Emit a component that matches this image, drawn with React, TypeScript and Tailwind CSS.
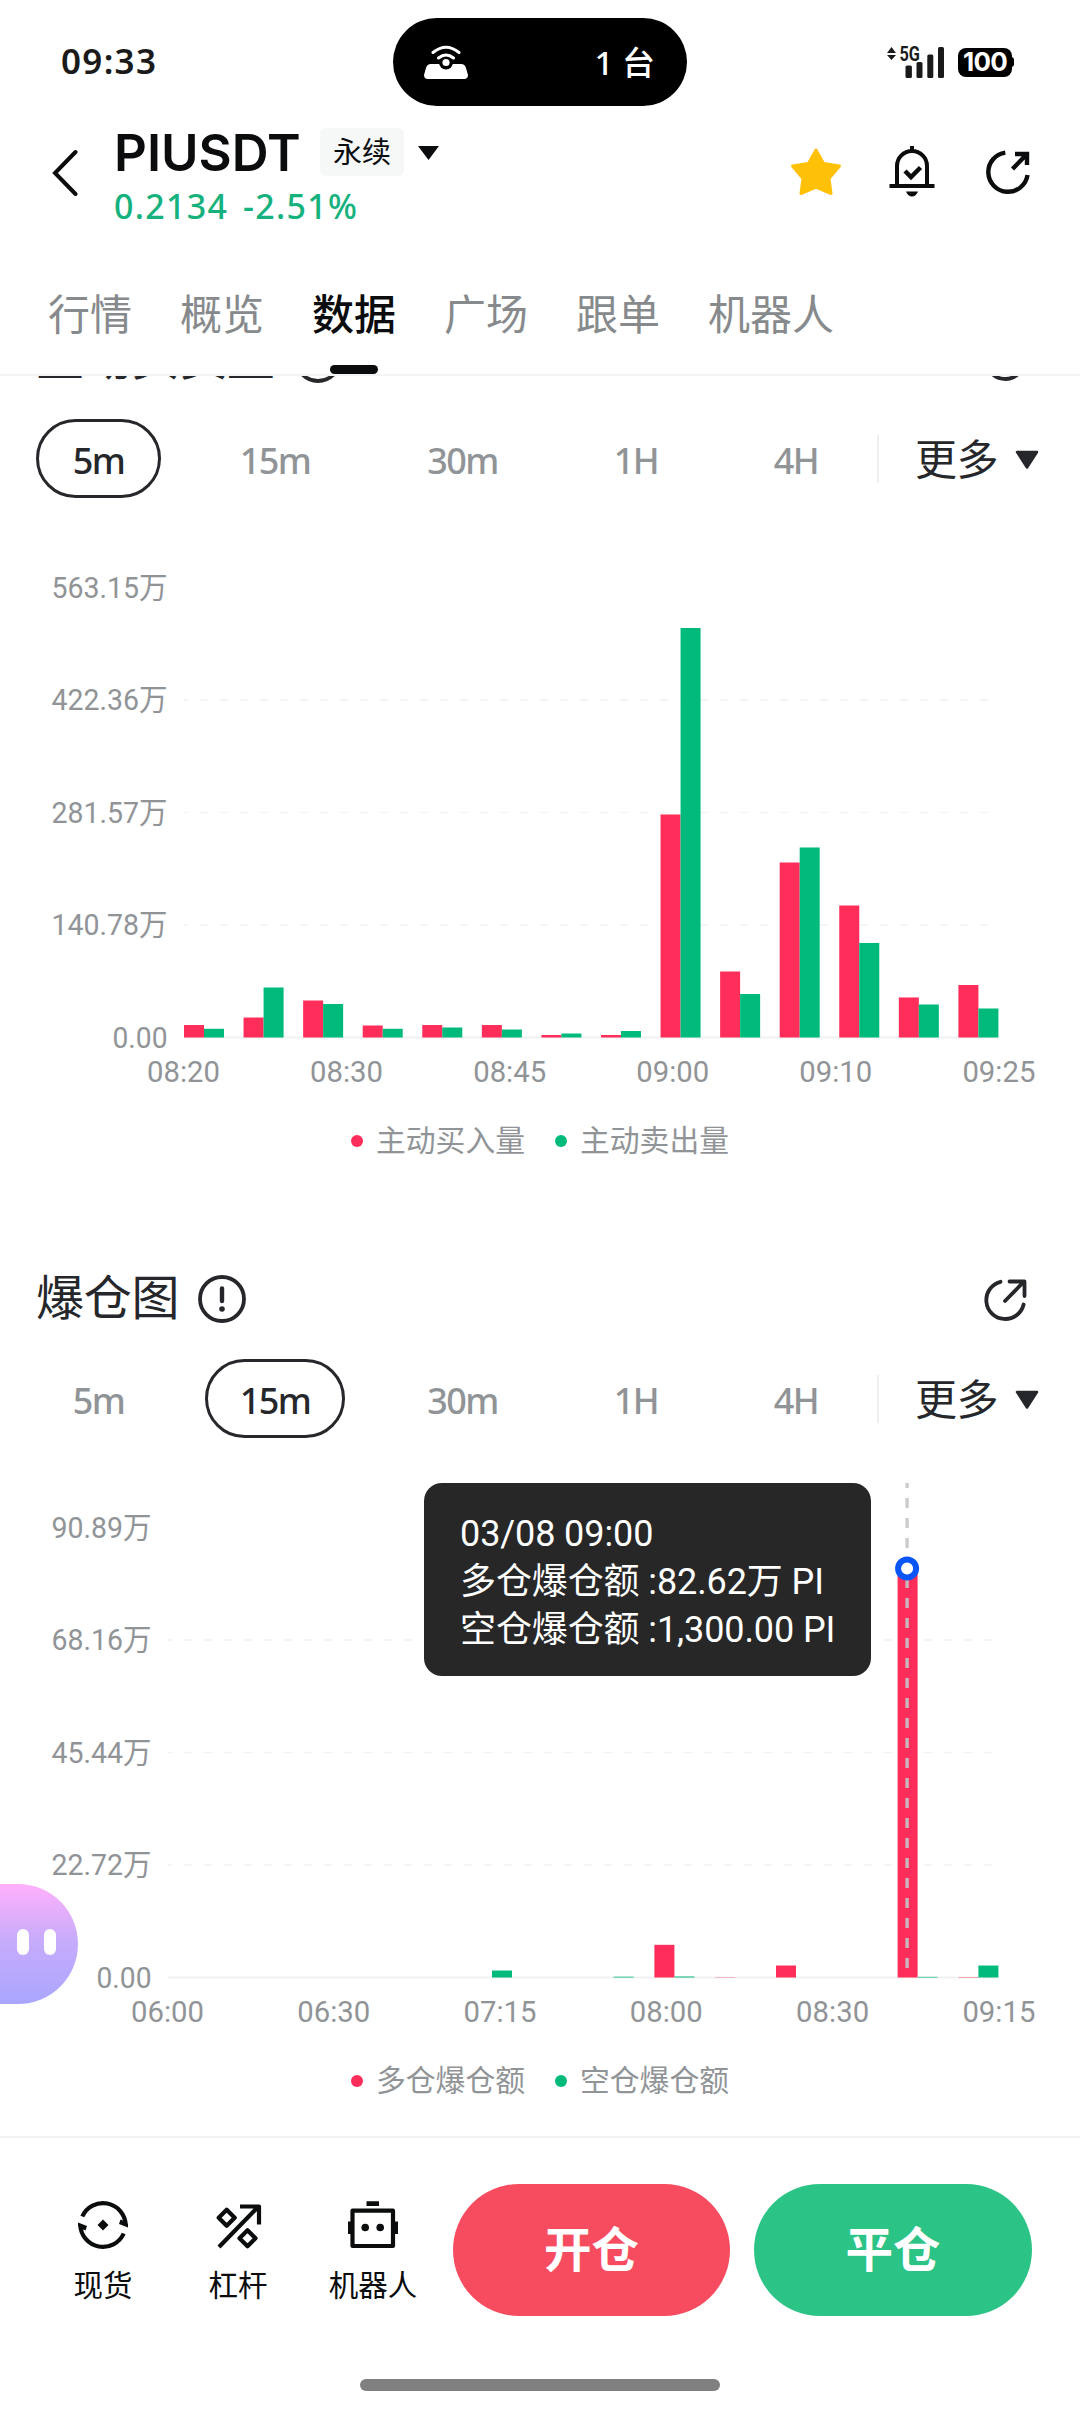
import type { ReactNode } from "react"
import clsx from "clsx"

const RED = "#ff2d5a"
const GREEN = "#00ba7c"

const TABS = ["行情", "概览", "数据", "广场", "跟单", "机器人"]

const PERIODS = [
  { id: "5m", width: "w-[125px]" },
  { id: "15m", width: "w-[140px]" },
  { id: "30m", width: "w-[147px]" },
  { id: "1H", width: "w-[112px]" },
  { id: "4H", width: "w-[120px]" },
]

// [red, green], unit: 万
type Pair = [number, number]

const VOLUME: Pair[] = [
  [15.6, 10.9], [25, 62.6], [46.3, 41.9], [15, 10.9], [15.6, 12.5], [15.6, 10], [3.1, 5],
  [3.1, 8.1], [279.1, 512.5], [82.6, 54.4], [219, 237.8], [165.2, 118.3], [50.1, 41.3], [65.7, 36.3],
]

const LIQUIDATION: Pair[] = [
  [0, 0], [0, 0], [0, 0], [0, 0], [0, 0], [0, 1.41], [0, 0],
  [0, 0.16], [6.6, 0.2], [0.06, 0], [2.42, 0], [0, 0], [82.62, 0.13], [0.08, 2.42],
]

/* ---------- icons ---------- */

function HotspotIcon() {
  return (
    <svg width="44" height="34" viewBox="0 0 44 34" fill="none">
      <path d="M7 19h30q4 0 5 4l2 7q0 4-4 4H4q-4 0-4-4l2-7q1-4 5-4Z" fill="#fff" />
      <circle cx="22" cy="17.5" r="7" fill="#000" />
      <circle cx="22" cy="17.5" r="3.6" fill="#fff" />
      <path d="M9 7.5Q22-3 35 7.5M14.5 13Q22 7 29.5 13" stroke="#fff" strokeWidth="3" strokeLinecap="round" />
    </svg>
  )
}

function SignalIcon() {
  return (
    <svg className="overflow-visible" width="58" height="32" viewBox="0 0 58 32" fill="#1a1a1a">
      <path d="M0 7 4.5 1 9 7ZM0 9h9l-4.5 5Z" />
      <text x="12.5" y="14.5" fontSize="19.5" fontWeight="700" fontFamily="Roboto, sans-serif" textLength="20.5" lengthAdjust="spacingAndGlyphs">5G</text>
      <rect x="18.5" y="19.5" width="6.4" height="12.5" rx="1.5" />
      <rect x="29.5" y="16" width="6" height="16" rx="1.5" />
      <rect x="40.3" y="8.5" width="6" height="23.5" rx="1.5" />
      <rect x="51" y="1" width="6" height="31" rx="1.5" />
    </svg>
  )
}

function StarIcon() {
  return (
    <svg width="52" height="50" viewBox="0 0 52 50">
      <path d="M26 3 33.5 16.5 49.5 19 39 31.5 41 46.5 26 40 11 46.5 13 31.5 2.5 19 18.5 16.5Z" fill="#ffc107" stroke="#ffc107" strokeWidth="3" strokeLinejoin="round" />
    </svg>
  )
}

function BellIcon() {
  return (
    <svg width="48" height="52" viewBox="0 0 48 52" fill="none" stroke="#0a0c0d" strokeWidth="4">
      <path d="M24 0v5M9 40V20a15 15 0 0 1 30 0v20M1.5 40h45" />
      <path d="m17 25 6 6 9.5-9.5" strokeWidth="4.5" />
      <path d="M18 45.5h12q-2 5-6 5t-6-5Z" fill="#0a0c0d" stroke="none" />
    </svg>
  )
}

function ShareBoldIcon() {
  return (
    <svg width="48" height="48" viewBox="0 0 48 48" fill="none" stroke="#0a0c0d" strokeWidth="4.4">
      <path d="M21.3 4.6A19.7 19.7 0 1 0 43.5 27M28.5 21 42.5 6.5M31 6H43V17" />
    </svg>
  )
}

function ShareIcon() {
  return (
    <svg width="48" height="48" viewBox="0 0 48 48" fill="none" stroke="#25272b" strokeWidth="3.8" strokeLinecap="round" strokeLinejoin="round">
      <path d="M19.5 5.8A18.9 18.9 0 1 0 42.6 28.5M24 25 43 5.5M28.5 5.5H43.5V20" />
    </svg>
  )
}

function InfoIcon() {
  return (
    <svg width="48" height="48" viewBox="0 0 48 48" fill="none" stroke="#25272b" strokeWidth="3.8" strokeLinecap="round">
      <circle cx="24" cy="24" r="22" />
      <path d="M24 13.5V26" strokeWidth="4.4" />
      <circle cx="24" cy="34" r="2.8" fill="#25272b" stroke="none" />
    </svg>
  )
}

function SpotIcon() {
  return (
    <svg width="50" height="50" viewBox="0 0 50 50">
      {[0, 180].map(deg => (
        <g key={deg} transform={`rotate(${deg} 25 25)`}>
          <path d="M4.3 16.5A22.7 22.7 0 0 1 47.7 25" fill="none" stroke="#0a0c0d" strokeWidth="4.2" />
          <path d="M50 24V27.5L41 24 42.5 19.5 46 21Z" fill="#0a0c0d" />
        </g>
      ))}
      <path d="m25 19.5 5.5 5.5-5.5 5.5-5.5-5.5Z" fill="#0a0c0d" />
    </svg>
  )
}

function LeverageIcon() {
  return (
    <svg width="48" height="48" viewBox="0 0 48 48" fill="none" stroke="#0a0c0d" strokeWidth="4.2" strokeLinejoin="round">
      <path d="M5 45 44 5M26 4.5H45V22.5" />
      <path d="m12.7 7.7 8 8-8 8-8-8ZM33.5 28.3l8 8-8 8-8-8Z" />
    </svg>
  )
}

function RobotIcon() {
  return (
    <svg width="50" height="50" viewBox="0 0 50 50" fill="#0a0c0d">
      <rect x="4.5" y="10.7" width="40.5" height="35.3" fill="none" stroke="#0a0c0d" strokeWidth="4.2" strokeLinejoin="round" />
      <path d="M18.5 1.3H31V6H18.5ZM0 21.5H4V34H0ZM45.5 21.5H50V34H45.5Z" />
      <circle cx="17.2" cy="27.5" r="3.8" />
      <circle cx="32.2" cy="27.5" r="3.8" />
    </svg>
  )
}

/* ---------- chart ---------- */

const BASE = 538.5
const STEP = 112.5
const RIGHT = 998.4
const BAR = 20

interface ChartProps {
  data: Pair[]
  yLabels: string[]
  xLabels: string[]
  max: number
  left: number
  yWidth: number
  active?: number
}

function BarChart({ data, yLabels, xLabels, max, left, yWidth, active }: ChartProps) {
  const pitch = (RIGHT - left - BAR * 2) / (data.length - 1)
  const toH = (v: number) => (v / max) * STEP * 4
  const cursorX = active === undefined ? 0 : left + active * pitch + 9.5

  return (
    <svg className="block" width="1080" height="601" viewBox="0 0 1080 601" fontFamily="Roboto, 'Noto Sans CJK SC', sans-serif" fontSize="30" fill="#919497">
      {[1, 2, 3].map(i => (
        <line key={i} x1={left} x2={RIGHT} y1={BASE - i * STEP} y2={BASE - i * STEP} stroke="#f1f2f2" strokeWidth="1.5" strokeDasharray="8 12" strokeDashoffset="4" />
      ))}
      <line x1={left} x2={RIGHT} y1={BASE} y2={BASE} stroke="#f0f1f2" strokeWidth="2" />

      {data.map(([r, g], i) => (
        <g key={i}>
          <rect x={left + i * pitch} y={BASE - toH(r)} width={BAR} height={toH(r)} fill={RED} />
          <rect x={left + i * pitch + BAR} y={BASE - toH(g)} width={BAR} height={toH(g)} fill={GREEN} />
        </g>
      ))}

      {yLabels.map((t, i) => (
        <text key={t} x={left - 16.5} y={98.5 + i * STEP} textAnchor="end" textLength={t === "0.00" ? 55 : yWidth} lengthAdjust="spacingAndGlyphs">{t}</text>
      ))}
      {xLabels.map((t, i) => (
        <text key={t} x={left - 0.5 + (i * (RIGHT + 1 - left)) / (xLabels.length - 1)} y="583" textAnchor="middle" textLength="73" lengthAdjust="spacingAndGlyphs">{t}</text>
      ))}

      {active !== undefined && (
        <g>
          <line x1={cursorX} x2={cursorX} y1="44" y2="529" stroke="#c4c6c8" strokeOpacity="0.9" strokeWidth="3.4" strokeDasharray="10 10" strokeDashoffset="5" />
          <circle cx={cursorX} cy={BASE - toH(data[active][0])} r="9" fill="#fff" stroke="#0a55f5" strokeWidth="6" />
        </g>
      )}
    </svg>
  )
}

function PeriodBar({ active }: { active: string }) {
  return (
    <div className="mt-8 mb-px flex h-[79px] items-center pl-9">
      <div className="flex gap-11">
        {PERIODS.map(p => (
          <div
            key={p.id}
            className={clsx(
              "flex h-[79px] items-center justify-center rounded-full border-[3px] pt-1 font-['Noto_Sans'] text-[36px] font-medium tracking-[-1.6px]",
              p.width,
              p.id === active ? "border-[#25272b] text-[#25272b]" : "border-transparent text-[#919497]"
            )}
          >
            {p.id}
          </div>
        ))}
      </div>
      <div className="ml-[21px] h-12 w-0.5 bg-[#eeeff0]" />
      <div className="ml-9 pt-0.5 text-[42px] leading-none tracking-[-0.5px] text-[#25272b]">更多</div>
      <svg className="ml-[17px] mt-0.5" width="24" height="20" viewBox="0 0 24 20">
        <path d="M2 2H22L12 17.5Z" fill="#25272b" stroke="#25272b" strokeWidth="2.5" strokeLinejoin="round" />
      </svg>
    </div>
  )
}

interface SectionProps {
  title: string
  period: string
  legend: [string, string]
  children: ReactNode
}

function Section({ title, period, legend, children }: SectionProps) {
  return (
    <section className="h-[940px]">
      <div className="flex h-[60px] items-center pl-9 pr-[51px]">
        <h2 className="pt-0.5 text-[48px] leading-none tracking-[-0.3px] text-[#25272b]">{title}</h2>
        <div className="ml-[19px] mt-1"><InfoIcon /></div>
        <div className="ml-auto mt-1.5"><ShareIcon /></div>
      </div>
      <PeriodBar active={period} />
      <div className="relative">{children}</div>
      <div className="mt-[21px] flex h-10 items-center justify-center gap-[30px] text-[29.8px] leading-none text-[#919497]">
        <div className="flex items-center gap-[13px]">
          <i className="size-3 rounded-full bg-[#ff2d5a]" />
          {legend[0]}
        </div>
        <div className="flex items-center gap-[13px]">
          <i className="size-3 rounded-full bg-[#00ba7c]" />
          {legend[1]}
        </div>
      </div>
    </section>
  )
}

function NavItem({ icon, label, className }: { icon: ReactNode; label: string; className: string }) {
  return (
    <div className={clsx("flex flex-col items-center", className)}>
      {icon}
      <span className="text-[29.5px] leading-[30px] whitespace-nowrap text-[#0a0c0d]">{label}</span>
    </div>
  )
}

export default function App() {
  return (
    <div className="relative flex h-[2412px] w-[1080px] flex-col overflow-hidden bg-white font-['Inter','Noto_Sans_CJK_SC',sans-serif]">
      {/* status bar */}
      <div className="flex h-[124px] shrink-0 items-start pt-[18px]">
        <div className="flex h-[88px] w-[393px] items-center pb-0.5 pl-[61px] font-['Noto_Sans'] text-[35px] font-semibold tracking-[1.3px] text-[#1a1a1a]">09:33</div>
        <div className="flex h-[88px] w-[294px] items-center justify-between rounded-full bg-black pl-[31px] pr-8 font-medium text-white">
          <HotspotIcon />
          <span className="font-['Noto_Sans','Noto_Sans_CJK_SC'] text-[33px] leading-none">1 台</span>
        </div>
        <div className="ml-[200px] flex h-[88px] items-center gap-[13px]">
          <SignalIcon />
          <div className="flex items-center">
            <div className="flex h-[29px] w-[54px] items-center justify-center rounded-[8px] bg-black text-[26px] leading-none font-bold tracking-[-0.8px] text-white">100</div>
            <div className="-ml-px h-2.5 w-[3px] rounded-r-sm bg-black" />
          </div>
        </div>
      </div>

      {/* pair header */}
      <header className="flex h-[104px] shrink-0 items-start">
        <svg className="ml-[49px] mt-[25px]" width="29" height="48" viewBox="0 0 29 48" fill="none" stroke="#0a0c0d" strokeWidth="4" strokeLinecap="round">
          <path d="M26.5 3 6 24 26.5 45" />
        </svg>
        <div className="ml-9">
          <div className="flex h-14 items-center">
            <h1 className="w-[206px] text-[51px] leading-none font-semibold text-[#0a0c0d]">PIUSDT</h1>
            <span className="flex h-12 w-[84px] items-center justify-center rounded-md bg-[#f6f7f7] text-[29px] leading-none text-[#0a0c0d]">永续</span>
            <svg className="ml-[14px] mt-0.5" width="21" height="14" viewBox="0 0 21 14">
              <path d="M0 0H21L10.5 14Z" fill="#0a0c0d" />
            </svg>
          </div>
          <div className="mt-2 flex font-['Noto_Sans'] text-[34px] leading-[36px] font-medium text-[#16b27e]">
            <span className="w-[129px] tracking-[1.3px]">0.2134</span>
            <span className="tracking-[1.3px]">-2.51%</span>
          </div>
        </div>
        <div className="ml-auto mr-[48px] flex items-center pt-[22px]">
          <StarIcon />
          <div className="ml-[46px]"><BellIcon /></div>
          <div className="ml-12"><ShareBoldIcon /></div>
        </div>
      </header>

      {/* tabs */}
      <nav className="flex h-[148px] shrink-0 gap-12 border-b-2 border-[#f3f4f4] pl-12 pt-[66px] text-[42px] leading-[42px]">
        {TABS.map(t => (
          <div key={t} className={clsx("flex flex-col items-center", t === "数据" ? "font-medium text-[#0a0c0d]" : "text-[#878a8c]")}>
            {t}
            {t === "数据" && <i className="mt-[29px] h-[9px] w-12 rounded-full bg-[#0a0c0d]" />}
          </div>
        ))}
      </nav>

      {/* scrolled content */}
      <main className="h-[1760px] shrink-0 overflow-hidden">
        <div className="-mt-[49px]">
          <Section title="主动买卖量" period="5m" legend={["主动买入量", "主动卖出量"]}>
            <BarChart
              data={VOLUME}
              max={563.15}
              left={184}
              yWidth={116}
              yLabels={["563.15万", "422.36万", "281.57万", "140.78万", "0.00"]}
              xLabels={["08:20", "08:30", "08:45", "09:00", "09:10", "09:25"]}
            />
          </Section>
          <Section title="爆仓图" period="15m" legend={["多仓爆仓额", "空仓爆仓额"]}>
            <BarChart
              data={LIQUIDATION}
              max={90.89}
              left={168}
              yWidth={100}
              yLabels={["90.89万", "68.16万", "45.44万", "22.72万", "0.00"]}
              xLabels={["06:00", "06:30", "07:15", "08:00", "08:30", "09:15"]}
              active={12}
            />
            <div className="absolute left-[424px] top-[44px] h-[193px] w-[447px] rounded-[18px] bg-[#272727] pl-9 pt-[27px] font-['Roboto','Noto_Sans_CJK_SC',sans-serif] text-[36px] leading-[48px] tracking-[-0.1px] whitespace-nowrap text-white">
              <p>03/08 09:00</p>
              <p>多仓爆仓额 :82.62万 PI</p>
              <p>空仓爆仓额 :1,300.00 PI</p>
            </div>
          </Section>
        </div>
      </main>

      {/* bottom actions */}
      <footer className="flex h-[243px] shrink-0 items-start border-t-2 border-[#f1f2f2]">
        <NavItem className="ml-[43px] mt-[62px] w-[120px] gap-5" icon={<SpotIcon />} label="现货" />
        <NavItem className="ml-[15px] mt-16 w-[120px] gap-5" icon={<LeverageIcon />} label="杠杆" />
        <NavItem className="ml-[15px] mt-[62px] w-[120px] gap-5" icon={<RobotIcon />} label="机器人" />
        <button className="ml-5 mt-[46px] h-[132px] w-[277px] rounded-full bg-[#f74c60] text-[47.5px] leading-none font-bold text-white">开仓</button>
        <button className="ml-6 mt-[46px] h-[132px] w-[278px] rounded-full bg-[#2cc386] text-[47.5px] leading-none font-bold text-white">平仓</button>
      </footer>
      <div className="mx-auto h-3 w-[360px] shrink-0 rounded-full bg-[#808080]" />

      {/* floating assistant */}
      <div className="absolute left-0 top-[1884px] flex h-[120px] w-[78px] items-center gap-[15px] rounded-r-full bg-linear-to-b from-[#ffb0fc] via-[#c9acfb] via-45% to-[#a9a6ff] pb-1 pl-[17px]">
        <i className="h-[26px] w-3 rounded-full bg-white" />
        <i className="h-[26px] w-3 rounded-full bg-white" />
      </div>
    </div>
  )
}
